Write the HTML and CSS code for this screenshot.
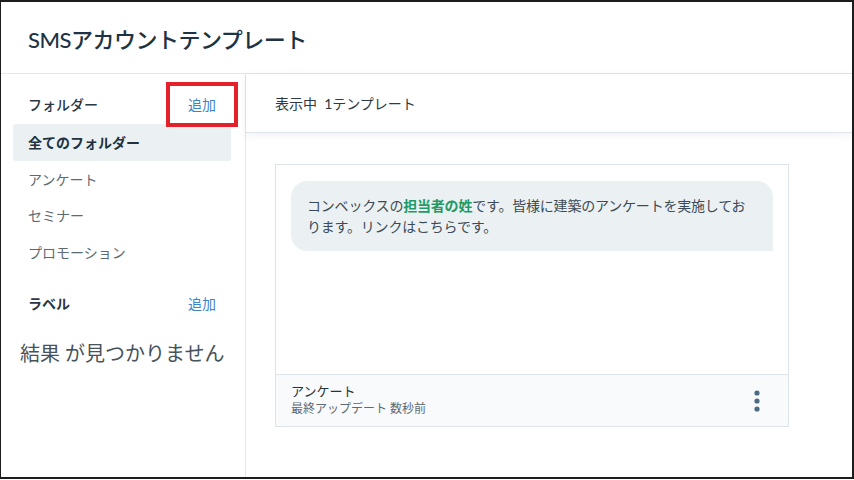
FILE: index.html
```html
<!DOCTYPE html>
<html lang="ja">
<head>
    <meta charset="UTF-8">
    <title>SMSアカウントテンプレート</title>
    <link rel="stylesheet" href="styles.css">
</head>
<body>
    <div class="frame">
        <div class="header">
            <h1>SMSアカウントテンプレート</h1>
        </div>

        <div class="layout">
            <div class="sidebar">
                <div class="side-head">
                    <span class="side-title">フォルダー</span>
                    <a class="add-link marked" href="#">追加</a>
                </div>
                <ul class="folder-list">
                    <li class="folder active">全てのフォルダー</li>
                    <li class="folder">アンケート</li>
                    <li class="folder">セミナー</li>
                    <li class="folder">プロモーション</li>
                </ul>
                <div class="side-head label-head">
                    <span class="side-title strong">ラベル</span>
                    <a class="add-link" href="#">追加</a>
                </div>
                <div class="empty">結果 が見つかりません</div>
            </div>

            <div class="main">
                <div class="toolbar">表示中&nbsp; 1テンプレート</div>

                <div class="card">
                    <div class="card-body">
                        <div class="bubble">コンベックスの<b class="token">担当者の姓</b>です。皆様に建築のアンケートを実施しております。リンクはこちらです。</div>
                    </div>
                    <div class="card-foot">
                        <div class="foot-text">
                            <div class="foot-name">アンケート</div>
                            <div class="foot-date">最終アップデート 数秒前</div>
                        </div>
                        <svg class="kebab" width="8" height="22" viewBox="0 0 8 22">
                            <circle cx="4" cy="3" r="2.6" fill="#4d6a83"/>
                            <circle cx="4" cy="11" r="2.6" fill="#4d6a83"/>
                            <circle cx="4" cy="19" r="2.6" fill="#4d6a83"/>
                        </svg>
                    </div>
                </div>
            </div>
        </div>
    </div>
</body>
</html>
```

FILE: styles.css
```css
/* Reset */
* {
    margin: 0;
    padding: 0;
    box-sizing: border-box;
}

html, body {
    background: #fff;
}

body {
    font-family: Lato, "Noto Sans CJK JP", sans-serif;
    color: #2b3a46;
}

ul {
    list-style: none;
}

a {
    text-decoration: none;
}

.frame {
    width: 854px;
    height: 479px;
    border: 2px solid #1c1c1c;
    border-left-width: 1px;
    display: flex;
    flex-direction: column;
    overflow: hidden;
}

/* Header */
.header {
    height: 72px;
    flex-shrink: 0;
    padding-left: 27px;
    display: flex;
    align-items: center;
    border-bottom: 1px solid #e1e7eb;
}

.header h1 {
    font-size: 22px;
    font-weight: 500;
    color: #1e3344;
    letter-spacing: -0.5px;
}

.layout {
    flex: 1;
    display: flex;
    min-height: 0;
}

/* Sidebar */
.sidebar {
    width: 245px;
    flex-shrink: 0;
    border-right: 1px solid #e1e7eb;
    padding: 8px 14px 0 12px;
}

.side-head {
    display: flex;
    justify-content: space-between;
    align-items: center;
    padding-left: 15px;
    margin-right: -7px;
    height: 44px;
}

.side-title {
    font-size: 14px;
    font-weight: 500;
    color: #2b3742;
}

.side-title.strong {
    font-weight: 700;
}

.add-link {
    font-size: 14px;
    color: #3d85c6;
    border: 4px solid transparent;
    padding: 0 18px;
    height: 45px;
    display: flex;
    align-items: center;
}

.add-link.marked {
    border-color: #e4202b;
}

.folder-list {
    margin-top: -2px;
}

.folder {
    height: 36.6px;
    display: flex;
    align-items: center;
    padding-left: 15px;
    font-size: 14px;
    color: #5e6a73;
}

.folder.active {
    background: #ebf1f3;
    color: #23313c;
    font-weight: 700;
    border-radius: 3px;
}

.label-head {
    margin-top: 11px;
}

.empty {
    font-size: 20px;
    color: #47525b;
    padding: 13px 0 0 7px;
}

/* Main */
.main {
    flex: 1;
    min-width: 0;
}

.toolbar {
    height: 59px;
    display: flex;
    align-items: center;
    padding-left: 29px;
    font-size: 14px;
    color: #2b3a46;
    border-bottom: 1px solid #dfe6eb;
    box-shadow: 0 2px 8px rgba(40, 70, 100, 0.08);
}

.card {
    width: 514px;
    margin: 31px 0 0 29px;
    border: 1px solid #dde4e9;
}

.card-body {
    height: 209px;
    padding: 16px 15px 0 15px;
}

.bubble {
    background: #ebf1f3;
    border-radius: 16px 16px 0 16px;
    padding: 14px 16px 14px 16px;
    font-size: 14px;
    line-height: 21px;
    color: #3c4a55;
    letter-spacing: -0.2px;
}

.token {
    color: #1f9a68;
    font-weight: 700;
}

.card-foot {
    height: 52px;
    background: #f8fafb;
    border-top: 1px solid #dde4e9;
    display: flex;
    align-items: center;
    justify-content: space-between;
    padding: 0 27px 2px 15px;
}

.foot-name {
    font-size: 13px;
    color: #25323d;
    line-height: 18px;
}

.foot-date {
    font-size: 12px;
    color: #5e6a73;
    line-height: 18px;
}

.kebab {
    display: block;
    margin-top: 2px;
}
```
